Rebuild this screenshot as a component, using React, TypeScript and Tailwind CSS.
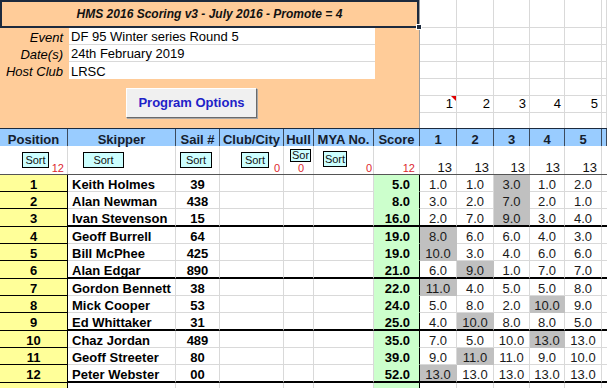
import React from "react";

const GRID =
  "grid grid-cols-[68px_108px_44px_64px_30px_60px_46px_37px_37px_36px_35px_37px_5px]";

type Row = {
  pos: number;
  name: string;
  sail: string;
  score: string;
  races: string[];
  drop: number;
};

const rows: Row[] = [
  { pos: 1, name: "Keith Holmes", sail: "39", score: "5.0", races: ["1.0", "1.0", "3.0", "1.0", "2.0"], drop: 2 },
  { pos: 2, name: "Alan Newman", sail: "438", score: "8.0", races: ["3.0", "2.0", "7.0", "2.0", "1.0"], drop: 2 },
  { pos: 3, name: "Ivan Stevenson", sail: "15", score: "16.0", races: ["2.0", "7.0", "9.0", "3.0", "4.0"], drop: 2 },
  { pos: 4, name: "Geoff Burrell", sail: "64", score: "19.0", races: ["8.0", "6.0", "6.0", "4.0", "3.0"], drop: 0 },
  { pos: 5, name: "Bill McPhee", sail: "425", score: "19.0", races: ["10.0", "3.0", "4.0", "6.0", "6.0"], drop: 0 },
  { pos: 6, name: "Alan Edgar", sail: "890", score: "21.0", races: ["6.0", "9.0", "1.0", "7.0", "7.0"], drop: 1 },
  { pos: 7, name: "Gordon Bennett", sail: "38", score: "22.0", races: ["11.0", "4.0", "5.0", "5.0", "8.0"], drop: 0 },
  { pos: 8, name: "Mick Cooper", sail: "53", score: "24.0", races: ["5.0", "8.0", "2.0", "10.0", "9.0"], drop: 3 },
  { pos: 9, name: "Ed Whittaker", sail: "31", score: "25.0", races: ["4.0", "10.0", "8.0", "8.0", "5.0"], drop: 1 },
  { pos: 10, name: "Chaz Jordan", sail: "489", score: "35.0", races: ["7.0", "5.0", "10.0", "13.0", "13.0"], drop: 3 },
  { pos: 11, name: "Geoff Streeter", sail: "80", score: "39.0", races: ["9.0", "11.0", "11.0", "9.0", "10.0"], drop: 1 },
  { pos: 12, name: "Peter Webster", sail: "00", score: "52.0", races: ["13.0", "13.0", "13.0", "13.0", "13.0"], drop: 0 },
];

const info = [
  ["Event", "DF 95 Winter series Round 5"],
  ["Date(s)", "24th February 2019"],
  ["Host Club", "LRSC"],
];

const headers = ["Position", "Skipper", "Sail #", "Club/City", "Hull", "MYA No.", "Score", "1", "2", "3", "4", "5", ""];

function Red({ children, className = "" }: { children: React.ReactNode; className?: string }) {
  return (
    <span className={`absolute bottom-0 text-[11px] leading-none text-[#dd1f2f] ${className}`}>
      {children}
    </span>
  );
}

function Sort({ className, label = "Sort" }: { className: string; label?: string }) {
  return (
    <div
      className={`absolute overflow-hidden border border-black bg-[#ccffff] text-[11px] text-[#111] ${className}`}
    >
      {label}
    </div>
  );
}

function Top() {
  const cells = [];
  for (let r = 0; r < 7; r++) {
    for (let c = 0; c < 6; c++) {
      const num = r === 5 && c < 5;
      cells.push(
        <div
          key={`${r}-${c}`}
          className={`relative flex items-end justify-end border-r border-[#d9d9d9] pr-[3px] pb-[2px] text-[13px] leading-none ${
            r < 6 ? "border-b" : ""
          }`}
        >
          {num && c + 1}
          {num && c === 0 && (
            <span className="absolute right-0 top-0 h-0 w-0 border-l-[5px] border-t-[5px] border-l-transparent border-t-[#e00000]" />
          )}
        </div>
      );
    }
  }

  return (
    <div className="relative flex h-[128px]">
      <div className="w-[420px] border-r border-[#9c9c9c] bg-[#ffcc99]">
        <div className="flex h-[28px] items-center justify-center border-2 border-[#1c2a3e] text-[12px] font-bold italic leading-none text-[#111]">
          HMS 2016 Scoring v3 - July 2016 - Promote = 4
        </div>
        {info.map(([label, value], i) => (
          <div key={label} className="flex h-[17px] text-[13px] leading-none">
            <div className="flex w-[68px] items-end justify-end pr-[5px] pb-[1px] italic">{label}</div>
            <div
              className={`ml-[1px] flex w-[306px] items-end bg-white pl-[2px] pb-[1px] ${
                i < 2 ? "border-b border-[#d9d9d9]" : ""
              }`}
            >
              {value}
            </div>
          </div>
        ))}
        <div className="pt-[9px] pl-[126px]">
          <div className="flex h-[30px] w-[131px] items-center justify-center border border-t-white border-l-white border-b-[#6a6a6a] border-r-[#6a6a6a] bg-[#f0f0f0] text-[13px] font-bold text-[#1e22c8] shadow-[1px_1px_0_#a8a8a8]">
            Program Options
          </div>
        </div>
      </div>
      <div className="grid w-[187px] grid-cols-[37px_37px_36px_35px_37px_5px] grid-rows-[28px_17px_17px_17px_17px_17px_15px]">
        {cells}
      </div>
      <div className="absolute left-[416px] top-[24px] h-[6px] w-[6px] border border-white bg-[#1c2a3e]" />
    </div>
  );
}

function Header() {
  return (
    <div className={`${GRID} h-[18px] border-t border-[#1c2a3e] bg-[#99ccff]`}>
      {headers.map((h, i) => (
        <div
          key={i}
          className="flex items-end justify-center border-r border-[#3c4a5c] text-[13px] font-bold leading-none text-[#15202e]"
        >
          {h}
        </div>
      ))}
    </div>
  );
}

function SortRow() {
  const cell = "relative border-r border-[#d9d9d9]";
  return (
    <div className={`${GRID} h-[29px] border-b border-[#555]`}>
      <div className={cell}>
        <Sort className="left-[22px] top-[6px] h-[16px] w-[27px] text-center leading-[14px]" />
        <Red className="right-[3px]">12</Red>
      </div>
      <div className={cell}>
        <Sort className="left-[15px] top-[6px] h-[16px] w-[41px] text-center leading-[14px]" />
      </div>
      <div className={cell}>
        <Sort className="left-[4px] top-[6px] h-[16px] w-[32px] text-center leading-[14px]" />
      </div>
      <div className={cell}>
        <Sort className="left-[21px] top-[6px] h-[16px] w-[28px] text-center leading-[14px]" />
        <Red className="right-[3px]">0</Red>
      </div>
      <div className={cell}>
        <Sort label="Sor" className="left-[6px] top-[3px] h-[13px] w-[21px] pl-[1px] leading-[10px]" />
        <Red className="left-[14px]">0</Red>
      </div>
      <div className={cell}>
        <Sort className="left-[9px] top-[5px] h-[16px] w-[24px] text-center leading-[14px]" />
        <Red className="right-[1px]">0</Red>
      </div>
      <div className={cell}>
        <Red className="right-[4px]">12</Red>
      </div>
      {[0, 1, 2, 3, 4].map((i) => (
        <div key={i} className={`${cell} flex items-end justify-end pr-[4px] text-[13px] leading-none text-[#111]`}>
          13
        </div>
      ))}
      <div />
    </div>
  );
}

function DataRow({ row, i }: { row: Row; i: number }) {
  const end = i % 3 === 2;
  const line = end ? "border-b-2 border-b-black" : "border-b border-b-[#d9d9d9]";
  const base = "flex items-end text-[13px] leading-none";
  return (
    <div className={`${GRID} ${end ? "h-[18px]" : "h-[17px]"}`}>
      <div
        className={`${base} justify-center border-r border-b border-r-black border-b-black bg-[#ffff99] font-bold ${
          end ? "pb-[1px]" : ""
        }`}
      >
        {row.pos}
      </div>
      <div className={`${base} border-r border-r-[#d9d9d9] pl-[4px] font-bold ${line}`}>{row.name}</div>
      <div className={`${base} justify-center border-r border-r-[#d9d9d9] font-bold ${line}`}>{row.sail}</div>
      <div className={`border-r border-r-[#d9d9d9] ${line}`} />
      <div className={`border-r border-r-[#d9d9d9] ${line}`} />
      <div className={`border-r border-r-[#d9d9d9] ${line}`} />
      <div
        className={`${base} justify-end border-r border-r-black bg-[#ccffcc] pr-[9px] font-bold ${
          end ? "border-b-2 border-b-black" : "border-b border-b-[#ccffcc]"
        }`}
      >
        {row.score}
      </div>
      {row.races.map((v, j) => {
        const drop = j === row.drop;
        return (
          <div
            key={j}
            className={`${base} justify-center border-r text-[#1a1a1a] ${
              drop ? "border-r-[#c0c0c0] bg-[#c0c0c0]" : "border-r-[#d9d9d9] bg-white"
            } ${end ? "border-b-2 border-b-black" : drop ? "border-b border-b-[#c0c0c0]" : "border-b border-b-[#d9d9d9]"}`}
          >
            {v}
          </div>
        );
      })}
      <div className={line} />
    </div>
  );
}

export default function App() {
  return (
    <div className="relative h-[388px] w-[607px] overflow-hidden bg-white font-['Liberation_Sans',Arial,sans-serif] text-black">
      <Top />
      <Header />
      <SortRow />
      {rows.map((row, i) => (
        <DataRow key={row.pos} row={row} i={i} />
      ))}
      <div className={`${GRID} h-[5px]`}>
        <div className="border-r border-black bg-[#ffff99]" />
        <div className="border-r border-[#d9d9d9]" />
        <div className="border-r border-[#d9d9d9]" />
        <div className="border-r border-[#d9d9d9]" />
        <div className="border-r border-[#d9d9d9]" />
        <div className="border-r border-[#d9d9d9]" />
        <div className="border-r border-black bg-[#ccffcc]" />
        <div className="border-r border-[#d9d9d9]" />
        <div className="border-r border-[#d9d9d9]" />
        <div className="border-r border-[#d9d9d9]" />
        <div className="border-r border-[#d9d9d9]" />
        <div className="border-r border-[#d9d9d9]" />
        <div />
      </div>
    </div>
  );
}
